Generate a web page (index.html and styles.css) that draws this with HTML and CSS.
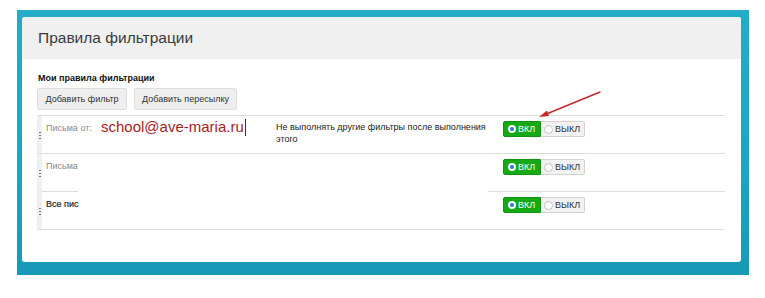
FILE: index.html
```html
<!DOCTYPE html>
<html lang="ru">
<head>
<meta charset="utf-8">
<title>Правила фильтрации</title>
<link rel="stylesheet" href="styles.css">
</head>
<body>
<div class="frame">
  <div class="panel">
    <div class="panel-head">Правила фильтрации</div>
    <div class="panel-body">
      <div class="section-title">Мои правила фильтрации</div>
      <div class="actions">
        <button class="btn btn-filter">Добавить фильтр</button>
        <button class="btn btn-forward">Добавить пересылку</button>
      </div>
      <div class="rules">
        <div class="rule rule-first">
          <div class="handle"><span class="dots"></span></div>
          <div class="label">Письма от:</div>
          <div class="email">school@ave-maria.ru<span class="caret"></span></div>
          <div class="note">Не выполнять другие фильтры после выполнения этого</div>
          <div class="toggle">
            <span class="on"><span class="radio radio-on"></span>ВКЛ</span><span class="off"><span class="radio"></span>ВЫКЛ</span>
          </div>
        </div>
        <div class="rule rule-split">
          <div class="handle"><span class="dots"></span></div>
          <div class="label">Письма</div>
          <div class="email"></div>
          <div class="note"></div>
          <div class="toggle">
            <span class="on"><span class="radio radio-on"></span>ВКЛ</span><span class="off"><span class="radio"></span>ВЫКЛ</span>
          </div>
        </div>
        <div class="rule">
          <div class="handle"><span class="dots"></span></div>
          <div class="label label-strong">Все пис</div>
          <div class="email"></div>
          <div class="note"></div>
          <div class="toggle">
            <span class="on"><span class="radio radio-on"></span>ВКЛ</span><span class="off"><span class="radio"></span>ВЫКЛ</span>
          </div>
        </div>
      </div>
    </div>
  </div>
</div>
<svg class="arrow" width="70" height="34" viewBox="0 0 70 34" xmlns="http://www.w3.org/2000/svg">
  <line x1="66" y1="3" x2="10" y2="26" stroke="#c62828" stroke-width="1.4" stroke-linecap="round"/>
  <polygon points="5,28 13,21.5 15,27" fill="#c62828"/>
</svg>
</body>
</html>
```

FILE: styles.css
```css
html, body {
  margin: 0;
  padding: 0;
  background: #ffffff;
}

body {
  font-family: "Liberation Sans", Arial, sans-serif;
  color: #222;
  position: relative;
  width: 765px;
  height: 298px;
  overflow: hidden;
}

.frame {
  box-sizing: border-box;
  margin: 10px 0 0 17px;
  width: 732px;
  height: 265px;
  padding: 7px 8px 13px 5px;
  background: linear-gradient(180deg, #24adca 0%, #1ca5c4 60%, #1898b7 100%);
}

.panel {
  height: 100%;
  background: #ffffff;
  border-radius: 3px;
  overflow: hidden;
}

.panel-head {
  height: 42px;
  line-height: 42px;
  padding-left: 16px;
  background: #f0f0f0;
  font-size: 15.5px;
  color: #3a3a3a;
}

.panel-body {
  padding: 13px 16px 0 15px;
}

.section-title {
  font-size: 9px;
  font-weight: bold;
  line-height: 12px;
  color: #111;
  padding-left: 1px;
}

.actions {
  display: flex;
  gap: 7px;
  margin-top: 4px;
}

.btn {
  box-sizing: border-box;
  height: 22px;
  padding: 0;
  border: 1px solid #dedede;
  border-radius: 2px;
  background: #eeeeee;
  font-family: "Liberation Sans", Arial, sans-serif;
  font-size: 9px;
  color: #333;
}

.btn-filter { width: 90px; }
.btn-forward { width: 103px; }

.rules {
  margin-top: 5px;
  width: 688px;
}

.rule {
  display: grid;
  grid-template-columns: 5px 59px 175px 227px auto;
  align-items: start;
  height: 38px;
  box-sizing: border-box;
  border-bottom: 1px solid #dddddd;
}

.rule-first {
  border-top: 1px solid #dddddd;
  height: 39px;
}

.rule-split {
  border-bottom: none;
  background: linear-gradient(90deg, #dddddd 0, #dddddd 41px, transparent 41px, transparent 451px, #dddddd 451px) left bottom / 100% 1px no-repeat;
}

.handle {
  align-self: stretch;
  background: #f0f0f0;
  display: flex;
  justify-content: center;
  padding-top: 15px;
}

.dots {
  width: 2px;
  height: 8px;
  background: radial-gradient(circle, #777 0.8px, transparent 1.1px) 0 0 / 2px 3px repeat-y;
}

.label {
  padding-left: 4px;
  margin-top: 6px;
  font-size: 9px;
  line-height: 12px;
  color: #8a8a8a;
}

.label-strong {
  color: #222;
  -webkit-text-stroke: 0.2px #222;
}

.email {
  margin-top: 2px;
  font-size: 15px;
  line-height: 18px;
  color: #a81d1d;
  display: flex;
  align-items: center;
}

.caret {
  display: inline-block;
  width: 1.5px;
  height: 17px;
  margin-left: 1px;
  background: #333;
}

.note {
  margin-top: 6px;
  max-width: 218px;
  font-size: 9px;
  line-height: 11.5px;
  color: #222;
}

.toggle {
  display: flex;
  margin-top: 5px;
  height: 16px;
  font-size: 9px;
}

.on, .off {
  box-sizing: border-box;
  display: flex;
  align-items: center;
  height: 16px;
}

.on {
  width: 38px;
  padding-left: 4px;
  gap: 2px;
  background: #16a916;
  border: 1px solid #119411;
  border-radius: 2px 0 0 2px;
  color: #ffffff;
}

.off {
  width: 44px;
  padding-left: 3px;
  gap: 2px;
  background: #f2f2f2;
  border: 1px solid #d3d3d3;
  border-left: none;
  border-radius: 0 2px 2px 0;
  color: #333;
}

.radio {
  box-sizing: border-box;
  width: 9px;
  height: 9px;
  border-radius: 50%;
  background: #ffffff;
  border: 1px solid #c4c4c4;
}

.radio-on {
  width: 8px;
  height: 8px;
  border: 2px solid #ffffff;
  background: #2a78d6;
}

.arrow {
  position: absolute;
  left: 534px;
  top: 89px;
}
```
